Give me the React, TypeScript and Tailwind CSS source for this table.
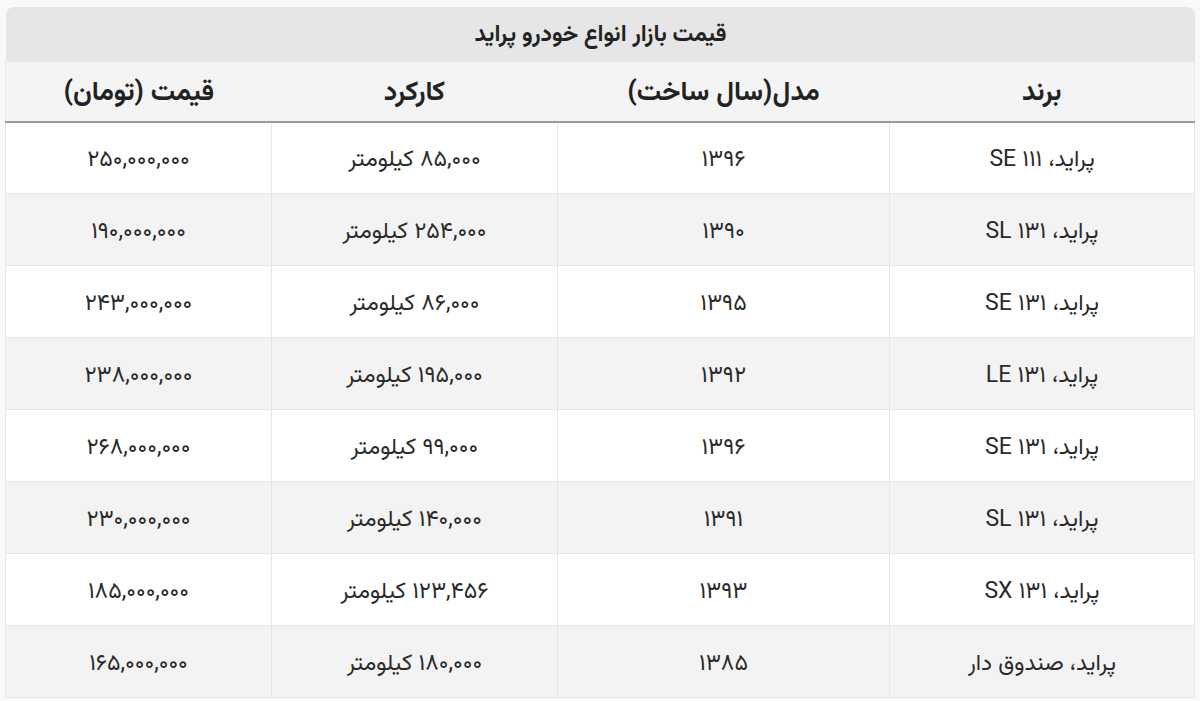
import React from "react";

const rows: [string, string, string, string][] = [
  ["پراید، SE ۱۱۱", "۱۳۹۶", "۸۵,۰۰۰ کیلومتر", "۲۵۰,۰۰۰,۰۰۰"],
  ["پراید، SL ۱۳۱", "۱۳۹۰", "۲۵۴,۰۰۰ کیلومتر", "۱۹۰,۰۰۰,۰۰۰"],
  ["پراید، SE ۱۳۱", "۱۳۹۵", "۸۶,۰۰۰ کیلومتر", "۲۴۳,۰۰۰,۰۰۰"],
  ["پراید، LE ۱۳۱", "۱۳۹۲", "۱۹۵,۰۰۰ کیلومتر", "۲۳۸,۰۰۰,۰۰۰"],
  ["پراید، SE ۱۳۱", "۱۳۹۶", "۹۹,۰۰۰ کیلومتر", "۲۶۸,۰۰۰,۰۰۰"],
  ["پراید، SL ۱۳۱", "۱۳۹۱", "۱۴۰,۰۰۰ کیلومتر", "۲۳۰,۰۰۰,۰۰۰"],
  ["پراید، SX ۱۳۱", "۱۳۹۳", "۱۲۳,۴۵۶ کیلومتر", "۱۸۵,۰۰۰,۰۰۰"],
  ["پراید، صندوق دار", "۱۳۸۵", "۱۸۰,۰۰۰ کیلومتر", "۱۶۵,۰۰۰,۰۰۰"],
];

const font = {
  fontFamily: '"Vazirmatn", "Noto Sans Arabic", "DejaVu Sans", "Noto Sans", sans-serif',
};

export default function App() {
  return (
    <div className="w-[1200px] h-[701px] bg-[#f9f9f9] pt-[7px] pl-[6px] pr-[5px] overflow-hidden" style={font}>
      <div dir="rtl" className="w-[1189px]">
        <div className="h-[54px] pt-[2px] bg-[#e6e6e6] rounded-t-[8px] flex items-center justify-center text-[23px] font-bold text-[#222]">
          قیمت بازار انواع خودرو پراید
        </div>
        <table className="w-full border-collapse table-fixed border border-[#e8e8e8] bg-white">
          <colgroup>
            <col className="w-[305px]" />
            <col className="w-[332px]" />
            <col className="w-[286px]" />
            <col className="w-[266px]" />
          </colgroup>
          <thead>
            <tr className="h-[60px] bg-[#f4f4f4] border-b-2 border-[#9a9a9a]">
              <th className="pt-[5px] text-[27px] font-bold text-[#222] text-center">برند</th>
              <th className="pt-[5px] text-[27px] font-bold text-[#222] text-center">مدل(سال ساخت)</th>
              <th className="pt-[5px] text-[27px] font-bold text-[#222] text-center">کارکرد</th>
              <th className="pt-[5px] text-[27px] font-bold text-[#222] text-center">قیمت (تومان)</th>
            </tr>
          </thead>
          <tbody>
            {rows.map((r, i) => (
              <tr
                key={i}
                className={`h-[72px] border-b border-[#e6e6e6] ${i % 2 === 1 ? "bg-[#f3f3f3]" : "bg-white"}`}
              >
                {r.map((c, j) => (
                  <td
                    key={j}
                    className="pt-[5px] text-center text-[23px] text-[#2a2a2a] border-l border-[#e6e6e6] last:border-l-0"
                  >
                    {c}
                  </td>
                ))}
              </tr>
            ))}
          </tbody>
        </table>
      </div>
    </div>
  );
}
